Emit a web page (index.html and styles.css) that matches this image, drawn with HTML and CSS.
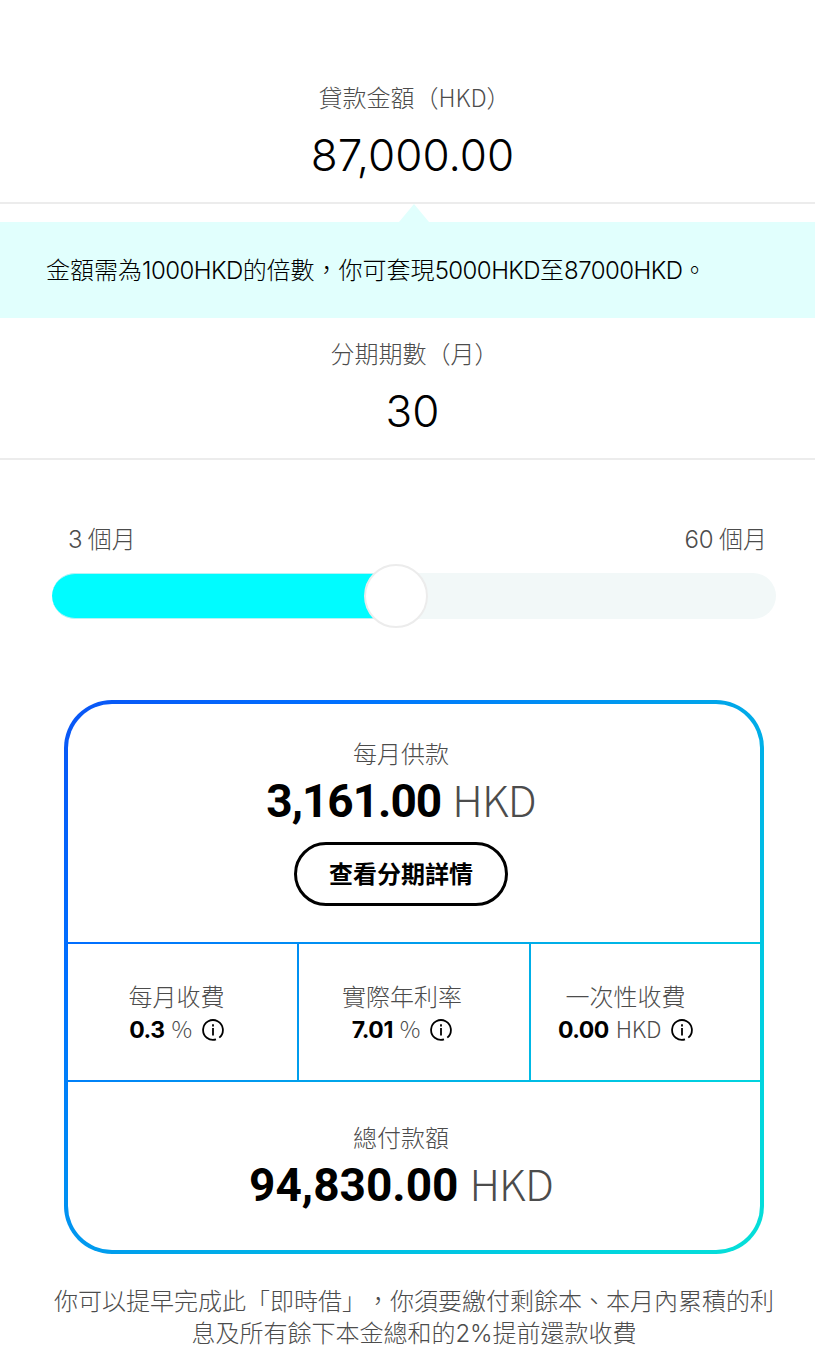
FILE: index.html
```html
<!DOCTYPE html>
<html lang="zh-HK">
<head>
  <meta charset="UTF-8">
  <meta name="viewport" content="width=device-width, initial-scale=1.0">
  <title>即時借</title>
  <link rel="stylesheet" href="styles.css">
</head>
<body>
  <div class="field amount">
    <div class="label">貸款金額（HKD）</div>
    <div class="value">87,000.00</div>
  </div>
  <div class="notice"><span class="notice-text">金額需為<span class="latin">1000HKD</span>的倍數，你可套現<span class="latin">5000HKD</span>至<span class="latin">87000HKD</span>。</span></div>
  <div class="field period">
    <div class="label">分期期數（月）</div>
    <div class="value">30</div>
  </div>

  <div class="slider">
    <div class="slider-labels">
      <span><span class="latin">3</span> 個月</span>
      <span><span class="latin">60</span> 個月</span>
    </div>
    <div class="track">
      <div class="track-fill"></div>
      <div class="thumb"></div>
    </div>
  </div>

  <div class="card">
    <div class="panel monthly">
      <div class="label">每月供款</div>
      <div class="total"><b class="total-num">3,161.00</b><span class="unit">HKD</span></div>
      <button type="button" class="details">查看分期詳情</button>
    </div>
    <div class="stats">
      <div class="stat fee">
        <div class="label">每月收費</div>
        <div class="stat-value"><b>0.3</b><span class="unit">%</span>
          <svg class="info" viewBox="0 0 22 22"><path d="M17.3 18.6A9.9 9.9 0 1 0 14 20.4"/><path d="M11 9v7.6"/><path d="M11 5.2v2.2"/></svg>
        </div>
      </div>
      <div class="stat rate">
        <div class="label">實際年利率</div>
        <div class="stat-value"><b>7.01</b><span class="unit">%</span>
          <svg class="info" viewBox="0 0 22 22"><path d="M17.3 18.6A9.9 9.9 0 1 0 14 20.4"/><path d="M11 9v7.6"/><path d="M11 5.2v2.2"/></svg>
        </div>
      </div>
      <div class="stat once">
        <div class="label">一次性收費</div>
        <div class="stat-value"><b>0.00</b><span class="unit">HKD</span>
          <svg class="info" viewBox="0 0 22 22"><path d="M17.3 18.6A9.9 9.9 0 1 0 14 20.4"/><path d="M11 9v7.6"/><path d="M11 5.2v2.2"/></svg>
        </div>
      </div>
    </div>
    <div class="panel repay">
      <div class="label">總付款額</div>
      <div class="total"><b class="total-num">94,830.00</b><span class="unit">HKD</span></div>
    </div>
  </div>

  <p class="footnote">你可以提早完成此「即時借」，你須要繳付剩餘本、本月內累積的利<br>息及所有餘下本金總和的<span class="latin">2%</span>提前還款收費</p>
</body>
</html>
```

FILE: styles.css
```css
* {
  box-sizing: border-box;
}
body {
  margin: 0;
  background-color: #fff;
  color: #4c4c4c;
  font-family: 'Noto Sans CJK TC', sans-serif;
  font-size: 24px;
  font-weight: 300;
  line-height: 32px;
  text-spacing-trim: space-all;
}
.latin {
  font-family: Inter, sans-serif;
}
.field {
  border-bottom: 2px solid #ececec;
  text-align: center;
}
.field .label {
  padding-left: 14px;
}
.amount {
  height: 204px;
  padding-top: 81px;
}
.period {
  height: 142px;
  padding-top: 19px;
}
.value {
  margin-top: 14px;
  padding-left: 10px;
  font-family: Inter, sans-serif;
  font-size: 44px;
  line-height: 56px;
  color: #000;
}
.notice {
  position: relative;
  height: 96px;
  margin-top: 18px;
  padding: 31px 46px;
  background-color: #e1fffd;
  color: #000;
  white-space: nowrap;
}
.notice .latin {
  letter-spacing: -0.55px;
}
.notice::before {
  content: "";
  position: absolute;
  top: -18px;
  left: 399px;
  border: 15px solid transparent;
  border-top: 0;
  border-bottom: 18px solid #e1fffd;
}
.slider {
  padding: 62px 39px 0 52px;
}
.slider-labels {
  display: flex;
  justify-content: space-between;
  padding: 0 9px 0 16px;
}
.track {
  position: relative;
  height: 46px;
  margin-top: 17px;
  border-radius: 23px;
  background-color: #f2f8f8;
}
.track-fill {
  width: 344px;
  height: 46px;
  border: 1px solid #b5f3f5;
  border-width: 1px 0;
  border-radius: 23px;
  background-color: #00fcff;
}
.thumb {
  position: absolute;
  top: -9px;
  left: 312px;
  width: 64px;
  height: 64px;
  border: 2px solid #ececec;
  border-radius: 50%;
  background-color: #fff;
}
/* the gradient shows through the padding and the gaps */
.card {
  display: grid;
  grid-template-rows: 238px 136px 168px;
  gap: 2px;
  width: 700px;
  margin: 81px 0 0 64px;
  padding: 4px;
  border-radius: 48px;
  background: linear-gradient(135deg, #0a55f5 0%, #0070ff 22%, #00a5ea 52%, #00d0e0 82%, #06e0d8 100%);
}
.panel {
  padding-right: 26px;
  background-color: #fff;
  text-align: center;
}
.monthly {
  padding-top: 33px;
  border-radius: 44px 44px 0 0;
}
.repay {
  padding-top: 39px;
  border-radius: 0 0 44px 44px;
}
.total {
  display: flex;
  justify-content: center;
  align-items: baseline;
  gap: 11px;
  margin-top: 1px;
  font-size: 43px;
  line-height: 56px;
}
.total .unit {
  letter-spacing: -0.9px;
}
.total-num {
  font-family: Roboto, sans-serif;
  font-size: 46px;
  font-weight: 700;
  color: #000;
}
.monthly .total-num {
  letter-spacing: -1px;
}
.details {
  width: 214px;
  height: 64px;
  margin-top: 13px;
  padding: 0 0 4px;
  border: 3px solid #000;
  border-radius: 32px;
  background-color: #fff;
  color: #000;
  font-family: 'Noto Sans CJK TC', sans-serif;
  font-size: 24px;
  font-weight: 700;
}
.stats {
  display: grid;
  grid-template-columns: 229px 230px 229px;
  gap: 2px;
}
.stat {
  padding-top: 36px;
  background-color: #fff;
  text-align: center;
}
.fee {
  padding-right: 12px;
}
.rate {
  padding-right: 24px;
}
.once {
  padding-right: 40px;
}
.stat-value {
  display: flex;
  justify-content: center;
  align-items: center;
  gap: 7px;
  height: 32px;
  margin-top: 2px;
}
.stat-value b {
  font-family: Inter, sans-serif;
  font-weight: 700;
  font-size: 23px;
  letter-spacing: -0.5px;
  color: #000;
}
.stat-value .unit {
  padding-bottom: 4px;
  font-size: 23px;
  letter-spacing: -0.3px;
}
.info {
  width: 22px;
  height: 22px;
  margin-left: 3px;
  fill: none;
  stroke: #000;
  stroke-width: 1.8;
}
.footnote {
  margin: 30px 0 0;
  padding-left: 13px;
  text-align: center;
  white-space: nowrap;
}
```
